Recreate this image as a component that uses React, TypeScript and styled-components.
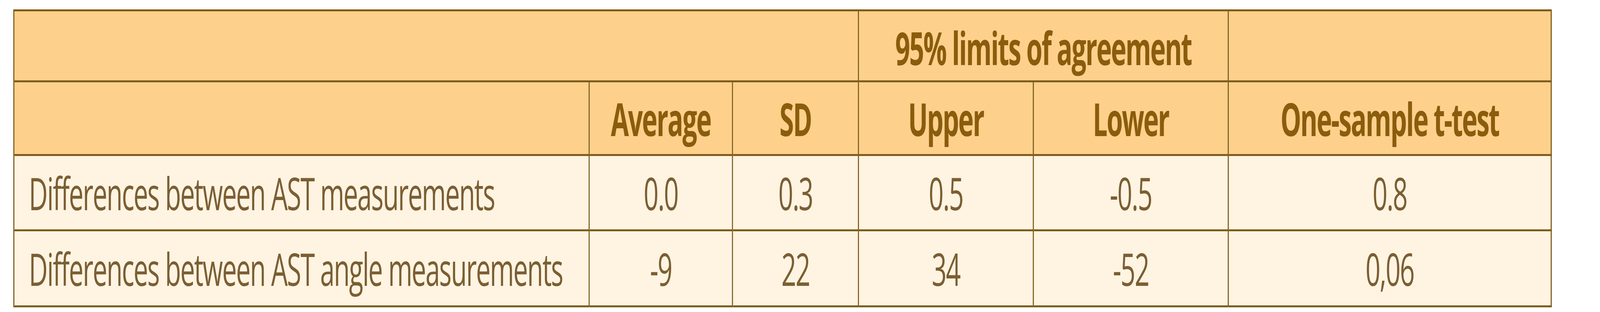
import React, { useLayoutEffect, useState } from "react";
import styled, { createGlobalStyle } from "styled-components";

// the layout is drawn in the reference's own pixels (7100 wide); if the
// window is narrower, the whole sheet is squeezed to its width
const DESIGN_WIDTH = 7100;

const GlobalStyle = createGlobalStyle`
  html, body {
    margin: 0;
    padding: 0;
    background: #ffffff;
    overflow: hidden;
  }
  body {
    font-family: "Open Sans", "Noto Sans", "Liberation Sans", sans-serif;
  }
`;

const LINE = "#7f5c1c";

const Sheet = styled.div`
  width: ${DESIGN_WIDTH}px;
  height: 800px;
  box-sizing: border-box;
  padding: 24px 0 0 59px;
  transform-origin: 0 0;
`;

const Table = styled.div`
  display: grid;
  grid-template-columns: 2553px 636px 559px 776px 865px 1433px;
  grid-template-rows: 182px 189px 193px 195px;
  width: max-content;
  border-top: 5px solid ${LINE};
  border-left: 5px solid ${LINE};
`;

const Cell = styled.div<{ $head?: boolean; $span?: number; $left?: boolean; $lift?: number }>`
  box-sizing: border-box;
  grid-column: span ${(p) => p.$span ?? 1};
  display: flex;
  align-items: center;
  justify-content: ${(p) => (p.$left ? "flex-start" : "center")};
  padding: ${(p) => (p.$left ? "0 0 0 64px" : "0")};
  padding-top: ${(p) => p.$lift ?? 0}px;
  border-right: 5px solid ${LINE};
  border-bottom: 5px solid ${LINE};
  background: ${(p) => (p.$head ? "#fdd18c" : "#fff4e2")};
  color: ${(p) => (p.$head ? "#8a5c0c" : "#7b5e33")};
  font-size: 116px;
  font-weight: ${(p) => (p.$head ? 700 : 400)};
  letter-spacing: ${(p) => (p.$head ? "-4px" : "-3.5px")};
  white-space: nowrap;
`;

const rows = [
  { label: "Differences between AST measurements", values: ["0.0", "0.3", "0.5", "-0.5", "0.8"] },
  { label: "Differences between AST angle measurements", values: ["-9", "22", "34", "-52", "0,06"] },
];

const headers = ["Average", "SD", "Upper", "Lower", "One-sample t-test"];

export default function App() {
  const [scale, setScale] = useState(1);

  useLayoutEffect(() => {
    const fit = () => setScale(Math.min(1, window.innerWidth / DESIGN_WIDTH));
    fit();
    window.addEventListener("resize", fit);
    return () => window.removeEventListener("resize", fit);
  }, []);

  return (
    <>
      <GlobalStyle />
      <Sheet style={{ transform: `scaleX(${scale})` }}>
        <Table>
          <Cell $head $span={3} />
          <Cell $head $span={2} $lift={8}>
            95% limits of agreement
          </Cell>
          <Cell $head />

          <Cell $head />
          {headers.map((h) => (
            <Cell key={h} $head $lift={2}>
              {h}
            </Cell>
          ))}

          {rows.map((r) => (
            <React.Fragment key={r.label}>
              <Cell $left>{r.label}</Cell>
              {r.values.map((v, i) => (
                <Cell key={i}>{v}</Cell>
              ))}
            </React.Fragment>
          ))}
        </Table>
      </Sheet>
    </>
  );
}
